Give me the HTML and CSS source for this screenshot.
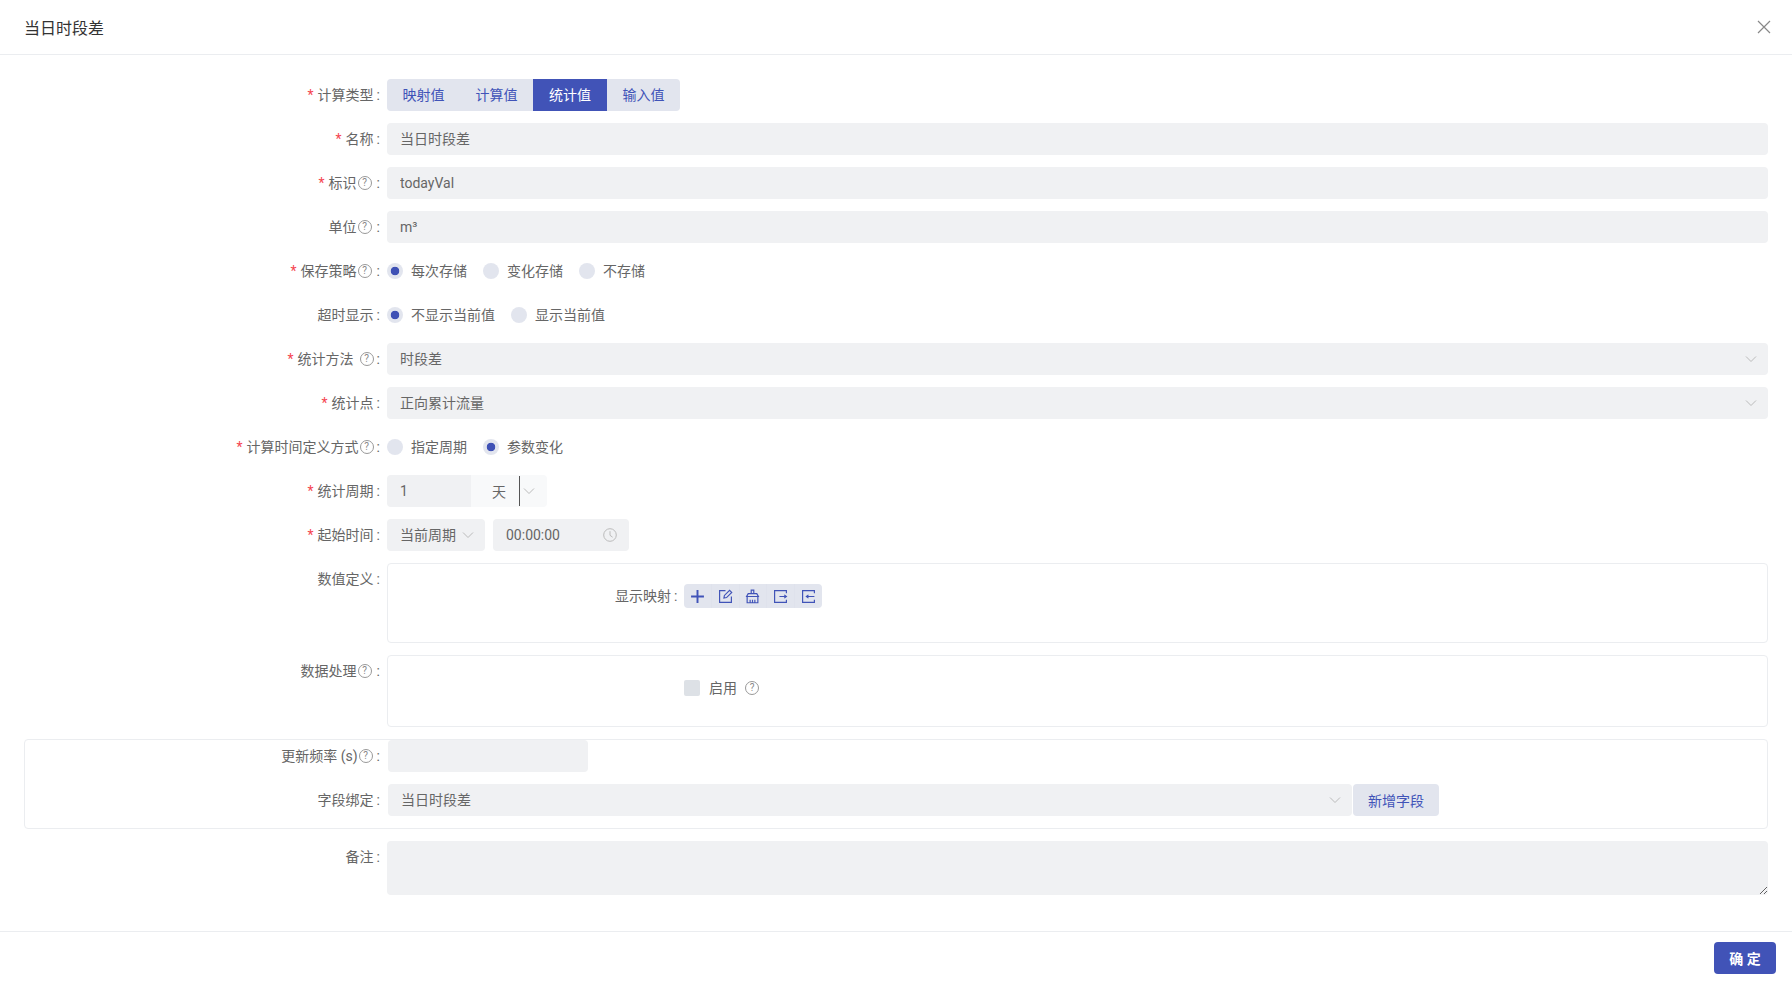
FILE: index.html
```html
<!DOCTYPE html>
<html lang="zh">
<head>
    <meta charset="UTF-8">
    <meta name="viewport" content="width=device-width, initial-scale=1.0">
    <title>当日时段差</title>
    <link rel="stylesheet" href="styles.css">
</head>
<body>
    <div class="dialog">
        <div class="dialog-header">
            <span class="dialog-title">当日时段差</span>
            <svg class="close" viewBox="0 0 14 14"><path d="M1 1 13 13M13 1 1 13"/></svg>
        </div>

        <form class="dialog-body">
            <div class="row">
                <label class="label"><i class="star">*</i>计算类型<b class="colon">:</b></label>
                <div class="segment">
                    <span class="seg-item">映射值</span>
                    <span class="seg-item">计算值</span>
                    <span class="seg-item active">统计值</span>
                    <span class="seg-item">输入值</span>
                </div>
            </div>
            <div class="row">
                <label class="label"><i class="star">*</i>名称<b class="colon">:</b></label>
                <input class="input input-cjk" value="当日时段差">
            </div>
            <div class="row">
                <label class="label"><i class="star">*</i>标识<span class="help tight">?</span><b class="colon">:</b></label>
                <input class="input" value="todayVal">
            </div>
            <div class="row">
                <label class="label">单位<span class="help tight">?</span><b class="colon">:</b></label>
                <input class="input" value="m³">
            </div>
            <div class="row">
                <label class="label"><i class="star">*</i>保存策略<span class="help tight">?</span><b class="colon">:</b></label>
                <div class="radios">
                    <span class="radio checked">每次存储</span>
                    <span class="radio">变化存储</span>
                    <span class="radio">不存储</span>
                </div>
            </div>
            <div class="row">
                <label class="label">超时显示<b class="colon">:</b></label>
                <div class="radios">
                    <span class="radio checked">不显示当前值</span>
                    <span class="radio">显示当前值</span>
                </div>
            </div>
            <div class="row">
                <label class="label"><i class="star">*</i>统计方法<span class="help wide">?</span><b class="colon">:</b></label>
                <div class="select grow">时段差
                    <svg class="chev" viewBox="0 0 12 12"><path d="M1 3.5 6 8.5 11 3.5"/></svg>
                </div>
            </div>
            <div class="row">
                <label class="label"><i class="star">*</i>统计点<b class="colon">:</b></label>
                <div class="select grow">正向累计流量
                    <svg class="chev" viewBox="0 0 12 12"><path d="M1 3.5 6 8.5 11 3.5"/></svg>
                </div>
            </div>
            <div class="row">
                <label class="label"><i class="star">*</i>计算时间定义方式<span class="help">?</span><b class="colon">:</b></label>
                <div class="radios">
                    <span class="radio">指定周期</span>
                    <span class="radio checked">参数变化</span>
                </div>
            </div>
            <div class="row">
                <label class="label"><i class="star">*</i>统计周期<b class="colon">:</b></label>
                <div class="period">
                    <input class="input period-num" value="1">
                    <div class="period-unit">
                        <span class="unit-text">天</span>
                        <span class="caret"></span>
                        <svg class="chev" viewBox="0 0 12 12"><path d="M1 3.5 6 8.5 11 3.5"/></svg>
                    </div>
                </div>
            </div>
            <div class="row">
                <label class="label"><i class="star">*</i>起始时间<b class="colon">:</b></label>
                <div class="start">
                    <div class="select start-cycle">当前周期
                        <svg class="chev" viewBox="0 0 12 12"><path d="M1 3.5 6 8.5 11 3.5"/></svg>
                    </div>
                    <div class="select start-time">00:00:00
                        <svg class="clock" viewBox="0 0 14 14"><circle cx="7" cy="7" r="6.3"/><path d="M7 3.2V7.3L9.6 9.2"/></svg>
                    </div>
                </div>
            </div>
            <div class="row">
                <label class="label">数值定义<b class="colon">:</b></label>
                <div class="box box-map">
                    <span class="inner-label">显示映射<b class="colon">:</b></span>
                    <div class="tools">
                        <span class="tool"><svg class="plus" viewBox="0 0 14 14"><path d="M7 1V13M1 7H13"/></svg></span>
                        <span class="tool"><svg viewBox="0 0 14 14"><path d="M7 1.500H1.500V12.500H12.500V7M5.500 8.500 6 6 10.800 1.200 12.800 3.200 8 8z"/></svg></span>
                        <span class="tool"><svg viewBox="0 0 14 14"><path d="M5.800 1H8.200V4.300H5.800zM3 4.300H11L12.500 7H1.500zM2 7V12.800H12V7M4.800 12.800V10M7 12.800V10M9.200 12.800V10"/></svg></span>
                        <span class="tool"><svg viewBox="0 0 14 14"><path d="M12.500 4V1.500H1.500V12.500H12.500V10M6 7H12.500M10.500 5.500 12.500 7 10.500 8.500"/></svg></span>
                        <span class="tool"><svg viewBox="0 0 14 14"><path d="M12.500 4V1.500H1.500V12.500H12.500V10M5 7H12.500M7 5.500 5 7 7 8.500"/></svg></span>
                    </div>
                </div>
            </div>
            <div class="row">
                <label class="label">数据处理<span class="help tight">?</span><b class="colon">:</b></label>
                <div class="box box-proc">
                    <span class="check"></span>
                    <span class="check-text">启用</span>
                    <span class="help">?</span>
                </div>
            </div>
            <div class="group">
                <div class="row">
                    <label class="label">更新频率 (s)<span class="help tight">?</span><b class="colon">:</b></label>
                    <input class="input rate">
                </div>
                <div class="row">
                    <label class="label">字段绑定<b class="colon">:</b></label>
                    <div class="select field">当日时段差
                        <svg class="chev" viewBox="0 0 12 12"><path d="M1 3.5 6 8.5 11 3.5"/></svg>
                    </div>
                    <button type="button" class="btn-light">新增字段</button>
                </div>
            </div>
            <div class="row">
                <label class="label">备注<b class="colon">:</b></label>
                <textarea class="textarea"></textarea>
            </div>
        </form>

        <div class="dialog-footer">
            <button type="button" class="btn-primary">确 定</button>
        </div>
    </div>
</body>
</html>
```

FILE: styles.css
```css
* {
    box-sizing: border-box;
}
body {
    margin: 0;
    background: #fff;
    color: #666;
    font-family: Roboto, "Noto Sans CJK SC", sans-serif;
    font-size: 14px;
}
input, textarea, button {
    font-family: inherit;
    font-size: 14px;
}
.dialog {
    height: 984px;
    display: flex;
    flex-direction: column;
    overflow: hidden;
}
.dialog-header {
    height: 55px;
    flex: none;
    display: flex;
    align-items: center;
    justify-content: space-between;
    padding: 0 21px 0 24px;
    border-bottom: 1px solid #ebedf0;
}
.dialog-title {
    font-size: 16px;
    color: #333;
}
.close {
    width: 14px;
    height: 14px;
    fill: none;
    stroke: #888;
    stroke-width: 1.2;
}
.dialog-body {
    flex: 1;
    padding: 24px 24px 0;
}
.row {
    display: flex;
    margin-bottom: 12px;
}
.label {
    width: 363px;
    height: 32px;
    flex: none;
    display: flex;
    align-items: center;
    justify-content: flex-end;
    padding-right: 7px;
    line-height: 32px;
    white-space: pre;
}
.star {
    color: #f5454f;
    font-style: normal;
    margin-right: 4px;
}
.colon {
    font-weight: normal;
    margin-left: 3px;
}
.help {
    width: 14px;
    height: 14px;
    flex: none;
    display: inline-flex;
    align-items: center;
    justify-content: center;
    margin-left: 1px;
    border: 1px solid #999;
    border-radius: 50%;
    color: #888;
    font-size: 10px;
    line-height: 1;
}
.help.tight {
    margin-right: 2px;
}
.help.wide {
    margin-left: 6px;
}

/* 计算类型 */
.segment {
    height: 32px;
    display: flex;
    background: #e2e5ee;
    border-radius: 4px;
    overflow: hidden;
}
.seg-item {
    width: 73px;
    text-align: center;
    line-height: 32px;
    color: #4053b8;
}
.seg-item.active {
    width: 74px;
    background: #4153b7;
    color: #fff;
}

/* 输入框 */
.input {
    flex: 1;
    min-width: 0;
    height: 32px;
    padding: 0 13px;
    border: none;
    border-radius: 4px;
    background: #f0f1f3;
    color: #666;
    outline: none;
}
.input-cjk {
    padding-bottom: 2px;
}
.select {
    height: 32px;
    display: flex;
    align-items: center;
    justify-content: space-between;
    padding: 0 11px 0 13px;
    border-radius: 4px;
    background: #f0f1f3;
    line-height: 32px;
}
.grow {
    flex: 1;
}
.chev {
    width: 12px;
    height: 12px;
    flex: none;
    fill: none;
    stroke: #bbb;
    stroke-width: 1;
}

/* 单选 */
.radios {
    height: 32px;
    display: flex;
    align-items: center;
    gap: 16px;
}
.radio {
    display: flex;
    align-items: center;
    line-height: 32px;
}
.radio::before {
    content: "";
    width: 16px;
    height: 16px;
    margin-right: 8px;
    border-radius: 50%;
    background: #e2e5ee;
}
.radio.checked::before {
    background: radial-gradient(circle, #3f51b5 0, #3f51b5 4px, #e2e5ee 4.6px);
}

/* 统计周期 / 起始时间 */
.period {
    width: 160px;
    height: 32px;
    display: flex;
}
.period-num {
    flex: none;
    width: 84px;
    border-radius: 4px 0 0 4px;
}
.period-unit {
    flex: 1;
    display: flex;
    align-items: center;
    background: #f8f9fa;
    border-radius: 0 4px 4px 0;
}
.unit-text {
    width: 48px;
    padding-left: 21px;
}
.caret {
    width: 1px;
    height: 30px;
    background: #555;
}
.period-unit .chev {
    margin-left: 3px;
}
.start {
    display: flex;
    gap: 8px;
}
.start-cycle {
    width: 98px;
    padding-right: 11px;
}
.start-time {
    width: 136px;
    padding-right: 12px;
}
.clock {
    width: 14px;
    height: 14px;
    fill: none;
    stroke: #bbb;
    stroke-width: 1;
}

/* 框 */
.box {
    flex: 1;
    display: flex;
    border: 1px solid #ebedf0;
    border-radius: 4px;
}
.box-map {
    height: 80px;
    padding: 20px 0 0 227px;
}
.box-proc {
    height: 72px;
    padding: 24px 0 0 296px;
}
.inner-label {
    width: 69px;
    height: 24px;
    line-height: 24px;
    white-space: nowrap;
}
.tools {
    width: 138px;
    height: 24px;
    display: flex;
    background: #e2e5ee;
    border-radius: 4px;
}
.tool {
    flex: 1;
    display: flex;
    align-items: center;
    justify-content: center;
    border-left: 1px solid #dfe2ec;
}
.tool:first-child {
    border-left: none;
}
.tool svg {
    width: 15px;
    height: 15px;
    fill: none;
    stroke: #4053b8;
    stroke-width: 1.1;
}
.tool .plus {
    margin-left: 1px;
    stroke-width: 1.8;
}
.check {
    width: 16px;
    height: 16px;
    border-radius: 2px;
    background: #dde1e6;
}
.check-text {
    height: 16px;
    margin-left: 9px;
    line-height: 16px;
}
.box-proc .help {
    margin: 1px 0 0 8px;
}
.group {
    height: 90px;
    margin-bottom: 12px;
    border: 1px solid #ebedf0;
    border-radius: 4px;
}
.group .label {
    width: 363px;
    padding-right: 8px;
}
.group .help.tight {
    margin-right: 1px;
}
.rate {
    flex: none;
    width: 200px;
}
.field {
    width: 964px;
}
.btn-light {
    width: 86px;
    height: 32px;
    margin-left: 1px;
    border: none;
    border-radius: 4px;
    background: #e2e5ee;
    color: #4053b8;
}
.textarea {
    flex: 1;
    height: 54px;
    border: none;
    border-radius: 4px;
    background: #f0f1f3;
    outline: none;
    resize: vertical;
}
.dialog-footer {
    height: 53px;
    flex: none;
    display: flex;
    justify-content: flex-end;
    padding: 10px 16px 0;
    border-top: 1px solid #ebedf0;
}
.btn-primary {
    width: 62px;
    height: 32px;
    border: none;
    border-radius: 4px;
    background: #4153b7;
    color: #fff;
    font-size: 14px;
    font-weight: bold;
}
```
